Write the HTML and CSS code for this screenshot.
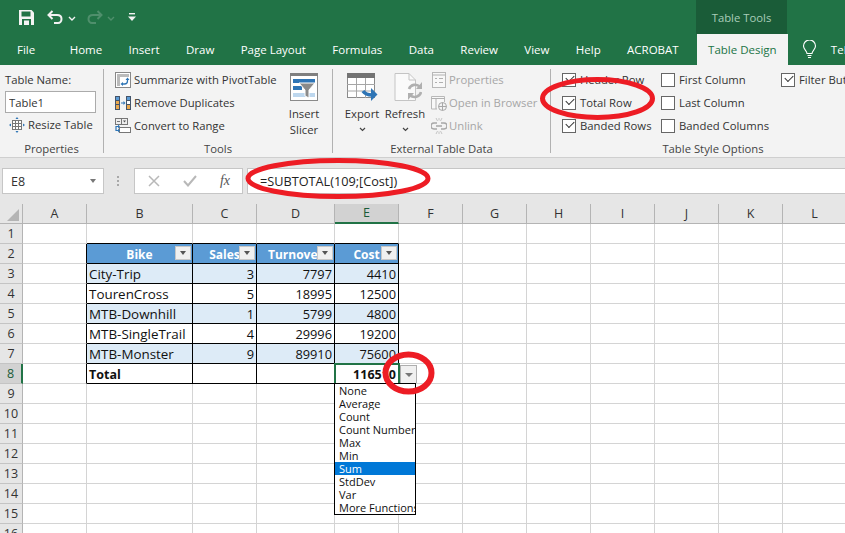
FILE: index.html
```html
<!DOCTYPE html>
<html lang="en">
<head>
    <meta charset="UTF-8">
    <meta name="viewport" content="width=device-width, initial-scale=1.0">
    <title>Table Design</title>
    <link rel="stylesheet" href="styles.css">
</head>
<body>
<div class="app">

    <!-- title bar -->
    <div class="titlebar">
        <svg class="qat-save" width="15" height="15" viewBox="0 0 15 15"><path d="M0 0H12.5L15 2.5V15H0Z" fill="#f4f4f4"/><rect x="2.5" y="1.5" width="9" height="5" fill="#217346"/><rect x="3" y="9" width="9" height="6" fill="#217346"/><rect x="5" y="10.5" width="5" height="4.5" fill="#f4f4f4"/></svg>
        <svg class="qat-undo" width="16" height="14" viewBox="0 0 16 14"><path d="M5.5 1 1.5 5l4 4M2 5h8c3 0 4.5 1.8 4.5 4S13 13 11 13H7" fill="none" stroke="#f2f2f2" stroke-width="2"/></svg>
        <svg class="qat-chev" width="8" height="5" viewBox="0 0 8 5"><path d="M1 1l3 3 3-3" fill="none" stroke="#f2f2f2" stroke-width="1.4"/></svg>
        <svg class="qat-redo" width="16" height="14" viewBox="0 0 16 14"><path d="M10.5 1l4 4-4 4M14 5H6C3 5 1.5 6.8 1.5 9S3 13 5 13h4" fill="none" stroke="#4f8f6c" stroke-width="2"/></svg>
        <svg class="qat-chev" width="8" height="5" viewBox="0 0 8 5"><path d="M1 1l3 3 3-3" fill="none" stroke="#4f8f6c" stroke-width="1.4"/></svg>
        <svg class="qat-more" width="8" height="9" viewBox="0 0 8 9"><rect x="1" y="0" width="6" height="1.4" fill="#f2f2f2"/><path d="M0 3.5H8L4 8Z" fill="#f2f2f2"/></svg>
        <div class="tools-tag">Table Tools</div>
    </div>

    <!-- ribbon tabs -->
    <div class="tabs">
        <div class="tab tab-file">File</div>
        <div class="tab">Home</div>
        <div class="tab">Insert</div>
        <div class="tab">Draw</div>
        <div class="tab">Page Layout</div>
        <div class="tab">Formulas</div>
        <div class="tab">Data</div>
        <div class="tab">Review</div>
        <div class="tab">View</div>
        <div class="tab">Help</div>
        <div class="tab">ACROBAT</div>
        <div class="tab tab-active">Table Design</div>
        <svg class="bulb" width="15" height="19" viewBox="0 0 14 19"><path d="M4.5 13.5C4.5 11 1 9.500 1 6a6 6 0 0 1 12 0c0 3.500-3.500 5-3.500 7.500ZM5 15.500h4M5.500 17.500h3" fill="none" stroke="#fff" stroke-width="1.100"/></svg>
        <div class="tab tab-tell">Tell me</div>
    </div>

    <!-- ribbon -->
    <div class="ribbon">
        <div class="group group-props">
            <div class="group-body">
                <div class="row">Table Name:</div>
                <input class="table-name" type="text" value="Table1">
                <div class="row resize-row">
                    <svg class="icon" width="16" height="16" viewBox="0 0 16 16"><rect x="3.500" y="3.500" width="9" height="9" fill="#fff" stroke="#777"/><path d="M3.500 6.500h9M3.500 9.500h9M6.500 3.500v9M9.500 3.500v9" stroke="#777"/><path d="M8 0 6.500 2h3ZM8 16l-1.500-2h3ZM0 8l2-1.500v3ZM16 8l-2-1.500v3Z" fill="#2e75b6"/></svg>
                    Resize Table
                </div>
            </div>
            <div class="group-label">Properties</div>
        </div>
        <div class="sep"></div>

        <div class="group group-tools">
            <div class="group-body tools-body">
                <div class="tool-list">
                    <div class="row">
                        <svg class="icon" width="16" height="16" viewBox="0 0 16 16"><rect x=".5" y=".5" width="15" height="15" fill="#fff" stroke="#888"/><rect x="2" y="2" width="3" height="12" fill="#bbb"/><rect x="2" y="2" width="12" height="3" fill="#bbb"/><path d="M7 12h2.500c2 0 3-1 3-3V7" fill="none" stroke="#2e75b6" stroke-width="1.300"/><path d="M10.500 8l2-2.500 2 2.500ZM8 10v4L5.500 12Z" fill="#2e75b6"/></svg>
                        Summarize with PivotTable
                    </div>
                    <div class="row">
                        <svg class="icon" width="16" height="16" viewBox="0 0 16 16"><rect x="0" y="1" width="5" height="14" fill="#44546a"/><rect x="1" y="2" width="3" height="3" fill="#5b9bd5"/><rect x="1" y="6" width="3" height="3" fill="#eaa94e"/><rect x="1" y="10" width="3" height="4" fill="#eaa94e"/><rect x="11" y="1" width="5" height="14" fill="#44546a"/><rect x="12" y="2" width="3" height="3" fill="#5b9bd5"/><rect x="12" y="6" width="3" height="3" fill="#fff"/><rect x="12" y="10" width="3" height="4" fill="#eaa94e"/><path d="M6 8h3" stroke="#2e75b6"/><path d="M8.500 6l2 2-2 2Z" fill="#2e75b6"/></svg>
                        Remove Duplicates
                    </div>
                    <div class="row">
                        <svg class="icon" width="16" height="16" viewBox="0 0 16 16"><rect x=".5" y=".5" width="12" height="6" fill="#eee" stroke="#777"/><path d="M6.500 .5v6M2 3.500h3" stroke="#777"/><path d="M8 2.500h3L9.500 4.500Z" fill="#555"/><rect x="4.500" y="9.500" width="11" height="5" fill="#fff" stroke="#777"/><path d="M3 8.500H1v4h2" fill="none" stroke="#2e75b6" stroke-width="1.200"/><path d="M3 6.500l2 2-2 2ZM3 10.500l2 2-2 2Z" fill="#2e75b6"/></svg>
                        Convert to Range
                    </div>
                </div>
                <div class="big-btn slicer">
                    <svg width="28" height="28" viewBox="0 0 28 28"><rect x=".5" y=".5" width="27" height="27" fill="#fff" stroke="#8a8a8a"/><rect x="0" y="0" width="28" height="3" fill="#7f7f7f"/><rect x="3" y="6" width="22" height="4" fill="#2e75b6"/><rect x="3" y="13" width="9" height="4" fill="#2e75b6"/><rect x="3" y="20" width="22" height="4" fill="#bdd7ee"/><path d="M9 10H25L19 17V25L15 23V17Z" fill="#8a8a8a" stroke="#fff"/></svg>
                    <span>Insert</span>
                    <span>Slicer</span>
                </div>
            </div>
            <div class="group-label">Tools</div>
        </div>
        <div class="sep"></div>

        <div class="group group-external">
            <div class="group-body external-body">
                <div class="big-btn export">
                    <svg width="31" height="28" viewBox="0 0 31 28"><rect x=".5" y=".5" width="27" height="24" fill="#fff" stroke="#8a8a8a"/><rect x="0" y="0" width="28" height="5" fill="#737373"/><path d="M0 11.500h28M0 18h28M9.500 5v20M18.500 5v20" stroke="#a6a6a6"/><path d="M16 18c2 3 5 4 9 4" fill="none" stroke="#2e75b6" stroke-width="3.500"/><path d="M24 15l6.500 6.500L24 28Z" fill="#2e75b6"/></svg>
                    <span>Export</span>
                    <svg class="chev" width="7" height="5" viewBox="0 0 7 5"><path d="M1 1l2.500 2.500L6 1" fill="none" stroke="#444" stroke-width="1.200"/></svg>
                </div>
                <div class="big-btn refresh">
                    <svg class="refresh-icon" width="28" height="28" viewBox="0 0 28 28"><path d="M1 .5H15L21.500 7V27.500H1Z" fill="#fafafa" stroke="#c4c4c4"/><path d="M15 .5V7H21.500" fill="none" stroke="#c4c4c4"/><path d="M15 16a6.500 6.500 0 0 1 11-2M27 19a6.500 6.500 0 0 1-11 3" fill="none" stroke="#b0b0b0" stroke-width="2.600"/><path d="M28 9v7h-6ZM14 27v-7h6Z" fill="#b0b0b0"/></svg>
                    <span>Refresh</span>
                    <svg class="chev" width="7" height="5" viewBox="0 0 7 5"><path d="M1 1l2.500 2.500L6 1" fill="none" stroke="#444" stroke-width="1.200"/></svg>
                </div>
                <div class="tool-list disabled">
                    <div class="row">
                        <svg class="icon" width="16" height="16" viewBox="0 0 16 16"><rect x="1.500" y=".5" width="13" height="15" fill="#f8f8f8" stroke="#b8b8b8"/><path d="M1.500 3h13M4 6.500h2M4 10.500h2M8 6.500h4M8 10.500h4" stroke="#b0b0b0"/></svg>
                        Properties
                    </div>
                    <div class="row">
                        <svg class="icon" width="16" height="16" viewBox="0 0 16 16"><path d="M6 14H.5V1.500h13V7" fill="#f8f8f8" stroke="#b8b8b8"/><path d="M.5 3.500h13M5 3.500V14" stroke="#b0b0b0"/><circle cx="11.500" cy="11.500" r="4" fill="#f3f3f3" stroke="#a8a8a8"/><path d="M7.500 11.500h8M11.500 7.500v8" stroke="#a8a8a8"/></svg>
                        Open in Browser
                    </div>
                    <div class="row">
                        <svg class="icon" width="16" height="16" viewBox="0 0 16 16"><path d="M6 5H3a2.500 2.500 0 0 0 0 6h3M10 5h3a2.500 2.500 0 0 1 0 6h-3M5 8h6" fill="none" stroke="#a8a8a8" stroke-width="1.500"/><path d="M5 0l1.500 3M11 0L9.500 3M8 0v2.500M5 16l1.500-3M11 16l-1.500-3M8 16v-2.500" stroke="#c4c4c4"/></svg>
                        Unlink
                    </div>
                </div>
            </div>
            <div class="group-label">External Table Data</div>
        </div>
        <div class="sep"></div>

        <div class="group group-options">
            <div class="group-body options-body">
                <div class="opt-col col-one">
                    <div class="row"><span class="check on"></span>Header Row</div>
                    <div class="row"><span class="check on"></span>Total Row</div>
                    <div class="row"><span class="check on"></span>Banded Rows</div>
                </div>
                <div class="opt-col col-two">
                    <div class="row"><span class="check"></span>First Column</div>
                    <div class="row"><span class="check"></span>Last Column</div>
                    <div class="row"><span class="check"></span>Banded Columns</div>
                </div>
                <div class="opt-col">
                    <div class="row"><span class="check on"></span>Filter Button</div>
                </div>
            </div>
            <div class="group-label options-label">Table Style Options</div>
        </div>
    </div>

    <!-- formula bar -->
    <div class="formula-area">
        <div class="name-box">E8<span class="arrow"></span></div>
        <div class="dots"></div>
        <div class="fx-box">
            <svg width="12" height="12" viewBox="0 0 12 12"><path d="M1 1l10 10M11 1L1 11" stroke="#b8b8b8" stroke-width="1.500"/></svg>
            <svg width="14" height="12" viewBox="0 0 14 12"><path d="M1 6l4 4.500L13 1" fill="none" stroke="#b8b8b8" stroke-width="2"/></svg>
            <span class="fx">fx</span>
        </div>
        <div class="formula-input">=SUBTOTAL(109;[Cost])</div>
    </div>

    <!-- sheet -->
    <div class="sheet">
        <table class="grid">
            <colgroup>
                <col class="c-head"><col class="c-64"><col class="c-b"><col class="c-64"><col class="c-d"><col class="c-64"><col class="c-64"><col class="c-64"><col class="c-64"><col class="c-64"><col class="c-64"><col class="c-64"><col class="c-64">
            </colgroup>
            <tr class="letters">
                <th class="corner"><span class="triangle"></span></th>
                <th>A</th><th>B</th><th>C</th><th>D</th><th class="sel-col">E</th><th>F</th><th>G</th><th>H</th><th>I</th><th>J</th><th>K</th><th>L</th>
            </tr>
            <tr><th>1</th><td class="above"></td><td class="above"></td><td class="above"></td><td class="above"></td><td class="above"></td><td></td><td></td><td></td><td></td><td></td><td></td><td></td></tr>
            <tr class="t-head"><th>2</th><td class="edge"></td>
                <td class="head">Bike<span class="filter"></span></td>
                <td class="head">Sales<span class="filter"></span></td>
                <td class="head">Turnover<span class="filter"></span></td>
                <td class="head">Cost<span class="filter"></span></td>
                <td></td><td></td><td></td><td></td><td></td><td></td><td></td></tr>
            <tr><th>3</th><td class="edge"></td><td class="band">City-Trip</td><td class="band num">3</td><td class="band num">7797</td><td class="band num">4410</td><td></td><td></td><td></td><td></td><td></td><td></td><td></td></tr>
            <tr><th>4</th><td class="edge"></td><td class="line">TourenCross</td><td class="line num">5</td><td class="line num">18995</td><td class="line num">12500</td><td></td><td></td><td></td><td></td><td></td><td></td><td></td></tr>
            <tr><th>5</th><td class="edge"></td><td class="band">MTB-Downhill</td><td class="band num">1</td><td class="band num">5799</td><td class="band num">4800</td><td></td><td></td><td></td><td></td><td></td><td></td><td></td></tr>
            <tr><th>6</th><td class="edge"></td><td class="line">MTB-SingleTrail</td><td class="line num">4</td><td class="line num">29996</td><td class="line num">19200</td><td></td><td></td><td></td><td></td><td></td><td></td><td></td></tr>
            <tr><th>7</th><td class="edge"></td><td class="band">MTB-Monster</td><td class="band num">9</td><td class="band num">89910</td><td class="band num">75600</td><td></td><td></td><td></td><td></td><td></td><td></td><td></td></tr>
            <tr class="t-total"><th class="sel-row">8</th><td class="edge"></td><td class="line">Total</td><td class="line"></td><td class="line"></td>
                <td class="line num selected">116510
                    <span class="cell-drop"><span class="arrow"></span></span>
                    <div class="fn-menu">
                        <div class="fn-item">None</div>
                        <div class="fn-item">Average</div>
                        <div class="fn-item">Count</div>
                        <div class="fn-item">Count Numbers</div>
                        <div class="fn-item">Max</div>
                        <div class="fn-item">Min</div>
                        <div class="fn-item fn-active">Sum</div>
                        <div class="fn-item">StdDev</div>
                        <div class="fn-item">Var</div>
                        <div class="fn-item">More Functions...</div>
                    </div>
                </td>
                <td></td><td></td><td></td><td></td><td></td><td></td><td></td></tr>
            <tr><th>9</th><td></td><td></td><td></td><td></td><td></td><td></td><td></td><td></td><td></td><td></td><td></td><td></td></tr>
            <tr><th>10</th><td></td><td></td><td></td><td></td><td></td><td></td><td></td><td></td><td></td><td></td><td></td><td></td></tr>
            <tr><th>11</th><td></td><td></td><td></td><td></td><td></td><td></td><td></td><td></td><td></td><td></td><td></td><td></td></tr>
            <tr><th>12</th><td></td><td></td><td></td><td></td><td></td><td></td><td></td><td></td><td></td><td></td><td></td><td></td></tr>
            <tr><th>13</th><td></td><td></td><td></td><td></td><td></td><td></td><td></td><td></td><td></td><td></td><td></td><td></td></tr>
            <tr><th>14</th><td></td><td></td><td></td><td></td><td></td><td></td><td></td><td></td><td></td><td></td><td></td><td></td></tr>
            <tr><th>15</th><td></td><td></td><td></td><td></td><td></td><td></td><td></td><td></td><td></td><td></td><td></td><td></td></tr>
            <tr><th>16</th><td></td><td></td><td></td><td></td><td></td><td></td><td></td><td></td><td></td><td></td><td></td><td></td></tr>
        </table>
    </div>

    <!-- red marks drawn over the screenshot -->
    <svg class="marks" width="845" height="533" viewBox="0 0 845 533">
        <ellipse cx="597.500" cy="98.500" rx="55" ry="19" fill="none" stroke="#ed1c24" stroke-width="5"/>
        <ellipse cx="338" cy="178.500" rx="90" ry="18" fill="none" stroke="#ed1c24" stroke-width="5"/>
        <ellipse cx="408.500" cy="373" rx="23" ry="18.500" fill="none" stroke="#ed1c24" stroke-width="6"/>
    </svg>
</div>
</body>
</html>
```

FILE: styles.css
```css
* {
    box-sizing: border-box;
}

html, body {
    margin: 0;
    padding: 0;
}

body {
    font-family: "Open Sans", "Noto Sans", Arial, sans-serif;
    font-size: 11.3px;
    color: #333;
    background-color: #fff;
}

.app {
    position: relative;
    width: 845px;
    height: 533px;
    overflow: hidden;
}

/* title bar */
.titlebar {
    display: flex;
    align-items: center;
    height: 34px;
    padding-left: 19px;
    background-color: #217346;
}

.qat-save {
    margin-right: 13px;
}

.qat-undo {
    margin-right: 5px;
}

.qat-chev {
    margin-right: 11px;
    margin-top: 2px;
}

.qat-redo {
    margin-right: 4px;
}

.qat-more {
    margin-left: 2px;
}

.tools-tag {
    display: flex;
    align-items: center;
    justify-content: center;
    align-self: stretch;
    width: 91px;
    margin-left: auto;
    margin-right: 58px;
    background-color: #1a5c38;
    color: #a9cdb9;
}

/* tabs */
.tabs {
    display: flex;
    align-items: stretch;
    height: 31px;
    background-color: #217346;
    color: #fff;
    font-size: 11.5px;
}

.tab {
    display: flex;
    flex-shrink: 0;
    align-items: center;
    padding: 0 13.2px;
    white-space: nowrap;
}

.tab-file {
    padding-left: 17px;
    padding-right: 21.3px;
}

.tab-active {
    margin-left: 5px;
    width: 91px;
    justify-content: center;
    padding: 0;
    background-color: #f3f3f3;
    color: #217346;
}

.bulb {
    flex-shrink: 0;
    margin: 6px 0 0 14px;
}

.tab-tell {
    padding-left: 14px;
}

/* ribbon */
.ribbon {
    display: flex;
    height: 93px;
    background-color: #f3f3f3;
    border-bottom: 1px solid #cfcfcf;
}

.group {
    display: flex;
    flex-direction: column;
    flex-shrink: 0;
}

.group-props {
    width: 103px;
}

.group-tools {
    width: 228px;
}

.group-external {
    width: 217px;
}

.group-options {
    width: 294px;
}

.group-body {
    flex: 1;
    padding-top: 3px;
}

.group-label {
    height: 16px;
    line-height: 16px;
    text-align: center;
    color: #444;
}

.options-label {
    padding-left: 30px;
}

.sep {
    flex-shrink: 0;
    width: 1px;
    margin: 4px 0;
    background-color: #b1b1b1;
}

.row {
    display: flex;
    align-items: center;
    height: 23px;
    white-space: nowrap;
}

.icon {
    flex-shrink: 0;
    margin-right: 3px;
}

.group-props .group-body {
    padding-left: 5px;
}

.table-name {
    display: block;
    width: 91px;
    height: 22px;
    padding: 0 3px;
    border: 1px solid #ababab;
    background-color: #fff;
    font: inherit;
    color: #333;
}

.resize-row {
    padding-left: 4px;
}

.tools-body {
    display: flex;
    padding-left: 11px;
}

.tool-list {
    width: 175px;
}

.big-btn {
    display: flex;
    flex-direction: column;
    align-items: center;
    padding-top: 5px;
    line-height: 16px;
    white-space: nowrap;
}

.big-btn svg {
    margin-bottom: 5px;
}

.big-btn .chev {
    margin: 5px 0 0;
}

.slicer {
    width: 28px;
}

.external-body {
    display: flex;
    padding-left: 13px;
}

.export {
    width: 32px;
}

.refresh {
    width: 42px;
    margin-left: 6px;
}

.big-btn .refresh-icon {
    margin-left: 6px;
}

.disabled {
    margin-left: 5px;
    width: 110px;
    color: #a6a6a6;
}

.disabled .icon {
    margin-right: 2px;
}

.options-body {
    display: flex;
    padding-left: 11px;
}

.opt-col {
    flex-shrink: 0;
}

.col-one {
    width: 99px;
}

.col-two {
    width: 120px;
}

.check {
    position: relative;
    display: inline-block;
    width: 14px;
    height: 14px;
    margin-right: 4px;
    border: 1px solid #666;
    background-color: #fff;
}

.check.on::after {
    content: "";
    position: absolute;
    left: 3px;
    top: 1.500px;
    width: 7px;
    height: 4px;
    border-left: 1.300px solid #333;
    border-bottom: 1.300px solid #333;
    transform: rotate(-45deg);
}

/* formula bar */
.formula-area {
    display: flex;
    align-items: flex-start;
    height: 46px;
    padding: 10px 0 0 2px;
    background-color: #e6e6e6;
}

.name-box {
    position: relative;
    display: flex;
    align-items: center;
    width: 102px;
    height: 26px;
    padding-left: 8px;
    border: 1px solid #c6c6c6;
    background-color: #fff;
    font-size: 12.500px;
}

.arrow {
    display: inline-block;
    width: 0;
    height: 0;
    border-left: 3.500px solid transparent;
    border-right: 3.500px solid transparent;
    border-top: 4px solid #777;
}

.name-box .arrow {
    position: absolute;
    right: 7px;
    top: 10px;
}

.dots {
    width: 2px;
    height: 10px;
    margin: 8px 15px 0 13px;
    background-image: repeating-linear-gradient(#a8a8a8 0 2px, transparent 2px 4px);
}

.fx-box {
    display: flex;
    align-items: center;
    justify-content: space-between;
    width: 109px;
    height: 26px;
    padding: 0 12px 0 13px;
    border: 1px solid #c6c6c6;
    background-color: #fff;
}

.fx {
    font-family: "Liberation Serif", serif;
    font-style: italic;
    font-size: 14px;
    color: #555;
}

.formula-input {
    flex: 1;
    height: 26px;
    margin-left: 4px;
    padding-left: 12px;
    line-height: 25px;
    border: 1px solid #c6c6c6;
    border-right: none;
    background-color: #fff;
    font-size: 12.700px;
    color: #222;
}

/* sheet */
.sheet {
    height: 329px;
    overflow: hidden;
}

.grid {
    table-layout: fixed;
    width: 847px;
    border-collapse: separate;
    border-spacing: 0;
    font-size: 13.400px;
    line-height: 18px;
}

.c-head {
    width: 23px;
}

.c-64 {
    width: 64px;
}

.c-b {
    width: 106px;
}

.c-d {
    width: 78px;
}

.grid tr {
    height: 20px;
}

.grid th {
    height: 20px;
    padding: 1px 0 0;
    font-size: 12.500px;
    font-weight: normal;
    background-color: #e6e6e6;
    border-right: 1px solid #b4b4b4;
    border-bottom: 1px solid #c4c4c4;
    color: #333;
    text-align: center;
}

.grid td {
    position: relative;
    height: 20px;
    padding: 1px 2px 0;
    border-right: 1px solid #d4d4d4;
    border-bottom: 1px solid #d4d4d4;
    white-space: nowrap;
    color: #111;
}

.corner {
    position: relative;
}

.triangle {
    position: absolute;
    right: 3px;
    bottom: 2px;
    width: 0;
    height: 0;
    border-left: 12px solid transparent;
    border-bottom: 12px solid #b4b4b4;
}

.grid .letters th {
    padding-top: 0;
    border-bottom: 1px solid #b4b4b4;
}

.grid .letters .sel-col {
    background-color: #d2d2d2;
    border-bottom: 2px solid #217346;
    color: #1a5c38;
}

.grid .sel-row {
    background-color: #d2d2d2;
    border-right: 2px solid #217346;
    color: #1a5c38;
}

.grid td.above:nth-child(n+3) {
    border-bottom-color: #000;
}

.grid td.edge {
    border-right-color: #000;
}

.grid td.head {
    overflow: hidden;
    padding-top: 2px;
    line-height: 17px;
    background-color: #5b9bd5;
    border-right-color: #000;
    border-bottom-color: #000;
    color: #fff;
    font-size: 12px;
    font-weight: bold;
    text-align: center;
}

.filter {
    position: absolute;
    right: 1px;
    top: 2px;
    width: 16px;
    height: 14px;
    background-color: #f0f0f0;
    border: 1px solid #c8c8c8;
}

.filter::after {
    content: "";
    position: absolute;
    left: 4px;
    top: 4px;
    border-left: 3.500px solid transparent;
    border-right: 3.500px solid transparent;
    border-top: 4px solid #555;
}

.grid td.band {
    background-color: #ddebf7;
    border-right-color: #000;
    border-bottom-color: #000;
}

.grid td.line {
    border-right-color: #000;
    border-bottom-color: #000;
}

.grid td.num {
    font-size: 12.800px;
    text-align: right;
}

.t-total td.line {
    padding-top: 2px;
    line-height: 17px;
    font-size: 12.500px;
    font-weight: bold;
}

.grid td.selected {
    outline: 2px solid #217346;
    outline-offset: -1px;
}

.cell-drop {
    position: absolute;
    left: 65px;
    top: 1px;
    display: flex;
    align-items: center;
    justify-content: center;
    width: 17px;
    height: 19px;
    background-color: #f0f0f0;
    border: 1px solid #aeaeae;
}

.cell-drop .arrow {
    border-left-width: 4px;
    border-right-width: 4px;
}

.fn-menu {
    position: absolute;
    left: -1px;
    top: 19px;
    width: 82px;
    height: 132px;
    overflow: hidden;
    border: 1px solid #000;
    background-color: #fff;
    font-size: 11px;
    font-weight: normal;
    text-align: left;
    z-index: 2;
}

.fn-item {
    height: 13px;
    line-height: 13px;
    padding-left: 4px;
    color: #111;
    overflow: hidden;
}

.fn-active {
    background-color: #0078d7;
    color: #fff;
}

.marks {
    position: absolute;
    left: 0;
    top: 0;
    z-index: 3;
    pointer-events: none;
}
```
